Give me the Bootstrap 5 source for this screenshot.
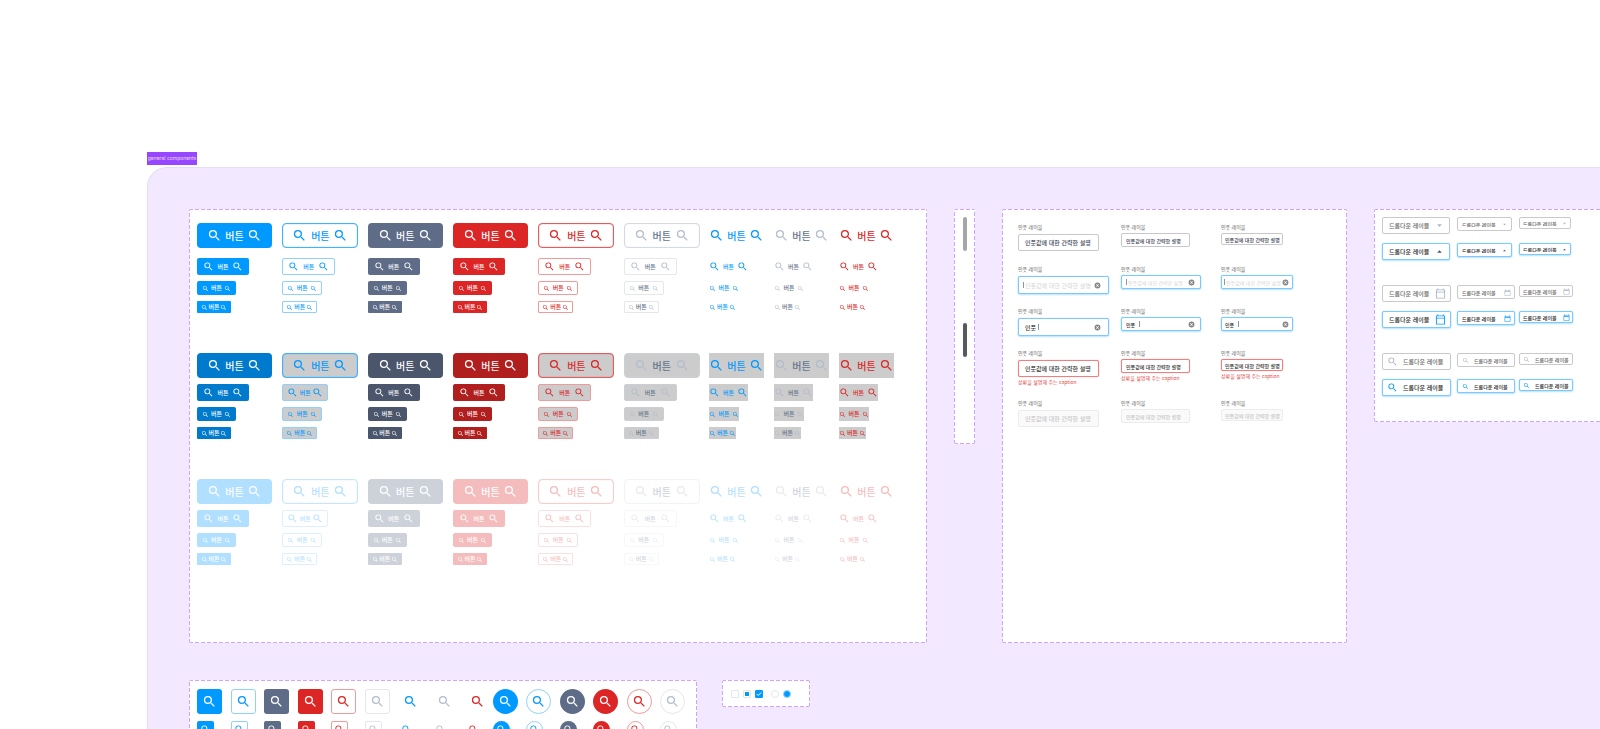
<!DOCTYPE html>
<html lang="ko">
<head>
<meta charset="utf-8">
<meta name="viewport" content="width=device-width, initial-scale=1">
<title>general components</title>
<link href="https://cdn.jsdelivr.net/npm/bootstrap@5.3.0/dist/css/bootstrap.min.css" rel="stylesheet">
<style>
  :root { --blue: #0099ff; --slate: #5e6c87; --crimson: #dc2626; --dash: #cfa3ff; }
  body { font-family: "Noto Sans CJK KR", "Inter", sans-serif; background: #fff; }
  .canvas { height: 100vh; padding: 152px 0 0 147px; }
  .board-tag { background: #9747ff; color: #ecdcff; font: 5px/13px "Inter", sans-serif; width: 50px; height: 13px; margin-bottom: 2px; }
  .board { background: #f2e8ff; border: 1px solid #e6dcf5; border-radius: 20px 0 0 0; border-right: 0; padding: 41px 0 0 41px; min-height: 600px; }
  .upper { gap: 27px; margin-bottom: 37px; }
  .lower { gap: 25px; }
  .frame {
    flex: none; border-radius: 2px; background-color: #fff;
    background-image:
      repeating-linear-gradient(90deg, var(--dash) 0 4px, transparent 4px 6px),
      repeating-linear-gradient(90deg, var(--dash) 0 4px, transparent 4px 6px),
      repeating-linear-gradient(0deg, var(--dash) 0 4px, transparent 4px 6px),
      repeating-linear-gradient(0deg, var(--dash) 0 4px, transparent 4px 6px);
    background-size: 100% 1px, 100% 1px, 1px 100%, 1px 100%;
    background-position: 0 0, 0 100%, 0 0, 100% 0;
    background-repeat: no-repeat;
  }
  svg { display: block; flex: none; fill: currentColor; }

  /* button sheet */
  .sheet { width: 738px; min-height: 434px; padding: 14px 33px 0 8px; }
  .state { display: grid; grid-template-columns: repeat(6, 1fr) 65px 65px 55px; margin-bottom: 40px; }
  .stack { display: flex; flex-direction: column; align-items: flex-start; gap: 6px; }
  .state-rest .size-lg { margin-bottom: 4px; }
  .act { display: flex; align-items: center; justify-content: space-between; border: 1px solid transparent; background: none; font-weight: 500; white-space: nowrap; line-height: 1; }
  .size-lg { width: 75px; height: 25px; padding: 0 9px; border-radius: 4px; font-size: 10px; }
  .size-md { width: 52px; height: 17px; padding: 0 5px; border-radius: 2px; font-size: 6px; }
  .size-sm { width: 39px; height: 14px; padding: 0 4px; border-radius: 2px; font-size: 6px; }
  .size-xs { width: 34px; height: 12px; padding: 0 3px; border-radius: 1px; font-size: 6px; }
  .size-lg svg { width: 15px; height: 15px; }
  .size-md svg { width: 11px; height: 11px; }
  .size-sm svg, .size-xs svg { width: 7px; height: 7px; }
  .line.size-lg { width: 76px; box-shadow: inset 0 0 1px currentColor; }
  .line.size-md { width: 53px; }
  .line.size-sm { width: 40px; }
  .line.size-xs { width: 35px; }
  .bare { border-width: 0; border-radius: 0; padding: 0; }
  .bare.size-lg { width: 55px; }
  .bare.size-md { width: 39px; }
  .bare.size-sm { width: 30px; }
  .bare.size-xs { width: 27px; }
  .state-hover .line-blue.size-md, .state-off .line-blue.size-md { width: 46px; padding: 0 4px; }
  .fill-blue { background: var(--blue); color: #fff; }
  .fill-slate { background: var(--slate); color: #fff; }
  .fill-red { background: var(--crimson); color: #fff; }
  .line-blue { color: var(--blue); border-color: #8fd0ff; }
  .line-red { color: var(--crimson); border-color: #f09a9a; }
  .line-gray { color: #64748b; border-color: #e4e7ec; }
  .line-blue.size-lg { border-color: #40b2ff; }
  .line-red.size-lg { border-color: #e55c5c; }
  .line-gray.size-lg { border-color: #d5d9e1; box-shadow: inset 0 0 1px #d5d9e1; }
  .bare-blue { color: var(--blue); }
  .bare-gray { color: #64748b; }
  .bare-red { color: var(--crimson); }
  .line-gray svg, .bare-gray svg { color: #b4bdcc; }
  .state-hover .fill-blue { background: #007acc; }
  .state-hover .fill-slate { background: #4b566c; }
  .state-hover .fill-red { background: #b01e1e; }
  .state-hover .line, .state-hover .bare { background: #ccc; }
  .state-hover .line-gray { border-color: #cbced4; }
  .state-off .act { opacity: .3; }

  /* scroll bars */
  .rail { width: 21px; height: 235px; padding: 8px 0 0 9px; }
  .thumb { width: 4px; height: 34px; border-radius: 2px; background: #a6a6a6; margin-bottom: 72px; }
  .thumb-dark { background: #595959; }

  /* text fields */
  .fields { width: 345px; padding: 14px 24px 0 16px; }
  .field-row { display: grid; grid-template-columns: 103px 100px 1fr; height: 42px; }
  .field-row.tall { height: 50px; }
  .field-label { display: block; font-size: 5px; line-height: 7px; color: #666; margin-bottom: 4px; }
  .box-md, .box-sm { margin-top: -1px; }
  .box { display: flex; align-items: center; border: 1px solid #c8c8cc; border-radius: 2px; background: #fff; color: #41485a; }
  .box input, .box select { border: 0; padding: 0; margin: 0; background: none; color: inherit; font-weight: 500; font-size: inherit; line-height: 1; min-width: 0; flex: 1 1 0; height: 8px; outline: 0; appearance: none; }
  .box input::placeholder { color: #d5d5d5; opacity: 1; font-weight: 400; }
  .box-lg { height: 17px; width: 81px; padding: 0 4px 0 6px; font-size: 6px; }
  .box-md { height: 14px; width: 69px; padding: 0 3px 0 4px; font-size: 5px; }
  .box-sm { height: 12px; width: 62px; padding: 0 2px 0 3px; font-size: 5px; }
  .active { border-color: #7cc9ff; box-shadow: 0 0 1px #7cc9ff, 0 1px 2px #0099ff40; color: #333; }
  .focused.box-lg { width: 91px; height: 18px; padding-right: 7px; }
  .focused.box-md { width: 80px; padding-right: 5px; }
  .focused.box-sm { width: 72px; height: 14px; padding-right: 3px; }
  .focused.blank { padding-left: 4px; }
  .focused.blank.box-sm { padding-left: 2px; }
  .caret { width: 1px; height: 6px; background: #8b93a8; margin-right: 1px; }
  .focused.typed input { flex: 0 0 13px; }
  .typed svg { margin-left: auto; }
  .focused svg { width: 7px; height: 7px; color: #858585; }
  .invalid { border-color: #ee8080; box-shadow: 0 0 1px #ee8080; color: #333; }
  .off { border-color: #ececec; background: #fafafa; }
  .off input { color: #c8c8c8; opacity: 1; }
  .note { font-size: 5px; line-height: 7px; color: #e24444; margin-top: 1px; }

  /* drop-downs */
  .drops { width: 300px; height: 213px; padding: 8px; }
  .drop-row { display: grid; grid-template-columns: 75px 62px 1fr; align-items: start; height: 26px; }
  .drop-row.after { height: 42px; }
  .drop-row .box { margin: 0; border-color: #c9c9c9; color: #666; }
  .drop-row .box.active { border-color: #7cc9ff; color: #222; }
  .drop-row .box-lg { width: 68px; }
  .drop-row .box-md { width: 55px; }
  .drop-row .box-sm { width: 52px; }
  .wide .box-lg { width: 69px; }
  .wide .box-md { width: 58px; }
  .wide .box-sm { width: 54px; }
  .drop-row svg { color: #a9b4c8; width: 7px; height: 7px; }
  .drop-row .box-lg svg { width: 11px; height: 11px; }
  .drop-row .active svg { color: var(--blue); }
  .drop-row .active .arrow { color: #475569; transform: rotate(180deg); }
  .find .box-lg { padding-left: 4px; }
  .find .box svg { margin-right: 5px; }

  /* icon buttons */
  .icons { width: 508px; min-height: 120px; padding: 9px 8px; }
  .squares { width: 293px; }
  .rounds { width: 192px; margin-left: 3px; }
  .cell { width: 25px; }
  .tile { display: flex; align-items: center; justify-content: center; width: 25px; height: 25px; padding: 0; border-width: 1px; border-style: solid; border-radius: 3px; margin-bottom: 7px; }
  .tile:not([class*="line-"]) { border-color: transparent; }
  .tile:not([class*="fill-"]) { background: none; }
  .tile[class*="fill-"] { border-width: 0; }
  .tile svg { width: 15px; height: 15px; }
  .tile-sm { width: 17px; height: 17px; border-radius: 2px; }
  .tile-sm svg { width: 11px; height: 11px; }
  .round { border-radius: 50%; }

  /* tick boxes and radios */
  .ticks { width: 88px; height: 27px; padding: 0 9px; gap: 4px; }
  .ticks input { appearance: none; flex: none; width: 8px; height: 8px; margin: 0; border: 1px solid #e6e6e6; border-radius: 1px; background: #fff center/100% no-repeat; }
  .ticks input[type=radio] { border-radius: 50%; }
  .ticks .part { background: var(--blue) content-box; padding: 1px; }
  .ticks .done { background-color: var(--blue); border-color: var(--blue); background-image: url("data:image/svg+xml,%3csvg xmlns='http://www.w3.org/2000/svg' viewBox='0 0 8 8'%3e%3cpath fill='none' stroke='%23fff' stroke-width='1.3' d='M1 4l2 2 4-4'/%3e%3c/svg%3e"); }
  .ticks .picked { background: var(--blue); border-color: #99d6ff; }
  .ticks .gap-before { margin-left: 4px; }
</style>
</head>
<body class="overflow-hidden">
<svg width="0" height="0" class="position-absolute" aria-hidden="true">
  <symbol id="search" viewBox="0 0 24 24"><path d="M15.5 14h-.79l-.28-.27A6.471 6.471 0 0 0 16 9.5 6.5 6.5 0 1 0 9.5 16c1.61 0 3.09-.59 4.23-1.57l.27.28v.79l5 4.99L20.49 19l-4.99-5zm-6 0C7.01 14 5 11.99 5 9.5S7.01 5 9.5 5 14 7.01 14 9.5 11.99 14 9.5 14z"/></symbol>
  <symbol id="clear" viewBox="0 0 24 24"><path d="M12 2a10 10 0 1 0 0 20 10 10 0 0 0 0-20zm5 13.600-1.400 1.400L12 13.400 8.400 17 7 15.600l3.600-3.600L7 8.400 8.400 7l3.600 3.600L15.600 7 17 8.400 13.400 12z"/></symbol>
  <symbol id="arrow" viewBox="0 0 24 24"><path d="M7 9.500h10l-5 5.500z"/></symbol>
  <symbol id="calendar" viewBox="0 0 24 24"><path d="M20 3h-1V1h-2v2H7V1H5v2H4c-1.100 0-2 .9-2 2v16c0 1.100.9 2 2 2h16c1.100 0 2-.9 2-2V5c0-1.100-.9-2-2-2zm0 18H4V10h16v11zm0-13H4V5h16v3z"/></symbol>
</svg>

<main class="canvas overflow-hidden">
  <div class="board-tag text-center text-nowrap">general components</div>
  <div class="board">
    <div class="upper d-flex align-items-start">
      <section class="frame sheet" id="buttons" aria-label="버튼"></section>
      <section class="frame rail" aria-label="스크롤바">
        <div class="thumb"></div>
        <div class="thumb thumb-dark"></div>
      </section>
      <section class="frame fields align-self-stretch" id="fields" aria-label="인풋"></section>
      <section class="frame drops" id="drops" aria-label="드롭다운"></section>
    </div>
    <div class="lower d-flex align-items-start">
      <section class="frame icons d-flex" aria-label="아이콘 버튼">
        <div class="squares d-flex justify-content-between" id="squares"></div>
        <div class="rounds d-flex justify-content-between" id="rounds"></div>
      </section>
      <section class="frame ticks d-flex align-items-center" aria-label="선택">
        <input type="checkbox" aria-label="선택 안 함">
        <input type="checkbox" class="part" aria-label="일부 선택">
        <input type="checkbox" class="done" checked aria-label="선택">
        <input type="radio" name="choice" class="gap-before" aria-label="첫째">
        <input type="radio" name="choice" class="picked" checked aria-label="둘째">
      </section>
    </div>
  </div>
</main>

<script src="https://cdn.jsdelivr.net/npm/bootstrap@5.3.0/dist/js/bootstrap.bundle.min.js"></script>
<script>
  const icon = (name) => `<svg class="${name}" aria-hidden="true"><use href="#${name}"/></svg>`;
  const put = (id, html) => { document.getElementById(id).innerHTML = html; };
  const sizes = ['lg', 'md', 'sm', 'xs'];
  const kinds = ['fill fill-blue', 'line line-blue', 'fill fill-slate', 'fill fill-red', 'line line-red',
                 'line line-gray', 'bare bare-blue', 'bare bare-gray', 'bare bare-red'];

  // every kind of button, in each state and size
  put('buttons', ['rest', 'hover', 'off'].map(state =>
    `<div class="state state-${state}">` + kinds.map(kind =>
      '<div class="stack">' + sizes.map(size =>
        `<button type="button" class="act ${kind} size-${size}"${state === 'off' ? ' disabled' : ''}>${icon('search')}<span>버튼</span>${icon('search')}</button>`
      ).join('') + '</div>').join('') + '</div>').join(''));

  // text fields: one row for each state
  const hint = '인풋값에 대한 간략한 설명';
  const inner = {
    plain: id => `<input id="${id}" value="${hint}">`,
    blank: id => `<span class="caret"></span><input id="${id}" placeholder="${hint}">${icon('clear')}`,
    typed: id => `<input id="${id}" value="인풋"><span class="caret"></span>${icon('clear')}`,
    invalid: id => `<input id="${id}" value="${hint}">`,
    off: id => `<input id="${id}" value="${hint}" disabled>`
  };
  const look = { plain: '', blank: 'active focused blank', typed: 'active focused typed', invalid: 'invalid', off: 'off' };
  put('fields', Object.keys(inner).map(state =>
    `<div class="field-row ${state === 'invalid' ? 'tall' : ''}">` + sizes.slice(0, 3).map(size => {
      const id = `${state}-${size}`;
      return `<div><label class="field-label" for="${id}">인풋 레이블</label>
        <div class="box box-${size} ${look[state]}">${inner[state](id)}</div>
        ${state === 'invalid' ? '<div class="note">상황을 설명해 주는 caption</div>' : ''}</div>`;
    }).join('') + '</div>').join(''));

  // drop-downs, date fields and search fields, at rest and active
  const text = '드롭다운 레이블';
  const drops = {
    pick: `<select aria-label="${text}"><option>${text}</option></select>${icon('arrow')}`,
    date: `<input aria-label="${text}" value="${text}">${icon('calendar')}`,
    find: `${icon('search')}<input aria-label="${text}" value="${text}">`
  };
  put('drops', Object.entries(drops).map(([type, html]) => ['', 'active'].map(state =>
    `<div class="drop-row ${type} ${type === 'pick' ? '' : 'wide'} ${state ? 'after' : ''}">` +
      sizes.slice(0, 3).map(size => `<div class="box box-${size} ${state}">${html}</div>`).join('') +
    '</div>').join('')).join(''));

  // icon-only buttons, large above small
  const tiles = (list, shape) => list.map(kind => {
    const color = kind.split(' ')[1];
    return '<div class="cell">' + ['', 'tile-sm'].map(size =>
      `<button type="button" aria-label="검색" class="tile ${color} ${size} ${shape}">${icon('search')}</button>`).join('') + '</div>';
  }).join('');
  put('squares', tiles(kinds, ''));
  put('rounds', tiles(kinds.slice(0, 6), 'round'));
</script>
</body>
</html>
